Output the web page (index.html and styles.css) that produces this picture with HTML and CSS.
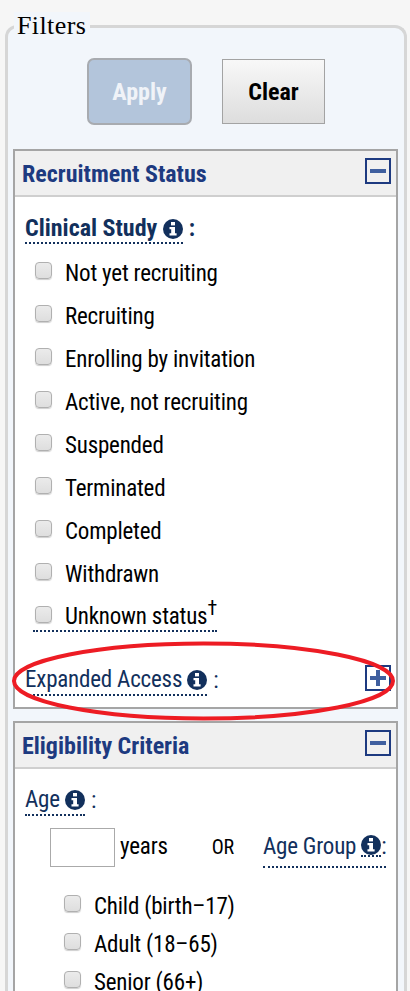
FILE: index.html
```html
<html>
  <head>
    <title>Filters</title>
    <link rel="stylesheet" href="styles.css">
  </head>
  <body>
    <fieldset class="filters">
      <legend class="filters-title">Filters</legend>
      <div class="actions">
        <button class="btn btn-apply">Apply</button>
        <button class="btn btn-clear">Clear</button>
      </div>

      <section class="panel panel-status">
        <header class="panel-head">
          <h3>Recruitment Status</h3>
          <svg class="toggle" width="26" height="26" viewBox="0 0 26 26"><rect x="1" y="1" width="24" height="24" fill="none" stroke="#1d3a80" stroke-width="2"/><rect x="5" y="11" width="16" height="4" fill="#3f5f9f"/></svg>
        </header>
        <div class="panel-body">
          <div class="label-row">
            <span class="term term-bold">Clinical Study <svg class="info" viewBox="0 0 20 20"><use href="#info"/></svg></span>
            <b class="colon">:</b>
          </div>
          <ul class="checks">
            <li><i class="box"></i>Not yet recruiting</li>
            <li><i class="box"></i>Recruiting</li>
            <li><i class="box"></i>Enrolling by invitation</li>
            <li><i class="box"></i>Active, not recruiting</li>
            <li><i class="box"></i>Suspended</li>
            <li><i class="box"></i>Terminated</li>
            <li><i class="box"></i>Completed</li>
            <li><i class="box"></i>Withdrawn</li>
            <li><i class="box"></i><span class="term unknown">Unknown status<sup>†</sup></span></li>
          </ul>
          <div class="label-row expanded">
            <span class="term">Expanded Access <svg class="info" viewBox="0 0 20 20"><use href="#info"/></svg></span>
            <span class="colon">:</span>
            <svg class="toggle" width="26" height="26" viewBox="0 0 26 26"><rect x="1" y="1" width="24" height="24" fill="none" stroke="#1d3a80" stroke-width="2"/><rect x="5" y="11" width="16" height="4" fill="#3f5f9f"/><rect x="11" y="5" width="4" height="16" fill="#3f5f9f"/></svg>
          </div>
        </div>
      </section>

      <section class="panel">
        <header class="panel-head">
          <h3>Eligibility Criteria</h3>
          <svg class="toggle" width="26" height="26" viewBox="0 0 26 26"><rect x="1" y="1" width="24" height="24" fill="none" stroke="#1d3a80" stroke-width="2"/><rect x="5" y="11" width="16" height="4" fill="#3f5f9f"/></svg>
        </header>
        <div class="panel-body">
          <div class="label-row">
            <span class="term">Age <svg class="info" viewBox="0 0 20 20"><use href="#info"/></svg></span>
            <span class="colon">:</span>
          </div>
          <div class="age-row">
            <input class="age-input" type="text">
            <span class="years">years</span>
            <span class="or">OR</span>
            <span class="term group">Age Group <svg class="info info-dotted" viewBox="0 0 20 20"><use href="#info"/></svg>:</span>
          </div>
          <ul class="checks checks-age">
            <li><i class="box"></i>Child (birth–17)</li>
            <li><i class="box"></i>Adult (18–65)</li>
            <li><i class="box"></i>Senior (66+)</li>
          </ul>
        </div>
      </section>
    </fieldset>

    <svg class="ring" width="410" height="991" viewBox="0 0 410 991"><ellipse cx="203.500" cy="681" rx="189.500" ry="37.500" fill="none" stroke="#ed1c24" stroke-width="4"/></svg>

    <svg class="defs" width="0" height="0">
      <symbol id="info" viewBox="0 0 20 20">
        <circle cx="10" cy="10" r="10" fill="#12305c"/>
        <rect x="8" y="3" width="4" height="3.400" fill="#fff"/>
        <path d="M6.500 8h5.500v6.200h1.600v2.300H6.500v-2.300h1.700v-3.900H6.500z" fill="#fff"/>
      </symbol>
    </svg>
  </body>
</html>
```

FILE: styles.css
```css
html, body {
  margin: 0;
  height: 991px;
  overflow: hidden;
  background: #f6f6f6;
}

body {
  position: relative;
  font-family: Roboto, "Liberation Sans", sans-serif;
  font-stretch: 75%;
  font-size: 23px;
  letter-spacing: -0.2px;
  color: #000;
}

.filters {
  box-sizing: border-box;
  width: 402px;
  min-height: 990px;
  margin: 12px 0 0 5px;
  padding: 18px 6px 0 5px;
  border: 3px solid #d6d6d6;
  border-bottom: 0;
  border-radius: 12px 12px 0 0;
  background: #f2f6fb;
}

.filters-title {
  margin-left: 1px;
  padding: 0 4px 0 3px;
  font: 26px/28px "Liberation Serif", serif;
  font-stretch: normal;
  letter-spacing: 0.4px;
  background: #f2f6fb;
}

.actions {
  display: flex;
  align-items: center;
  gap: 30px;
  margin-left: 74px;
}

.btn {
  box-sizing: border-box;
  padding: 0;
  font-family: inherit;
  font-stretch: inherit;
  font-size: 24px;
  font-weight: bold;
  letter-spacing: 0;
}

.btn-apply {
  width: 105px;
  height: 67px;
  border: 2px solid #a8abb0;
  border-radius: 7px;
  background: #b3c5db;
  color: #f0f3f8;
}

.btn-clear {
  width: 103px;
  height: 65px;
  border: 1px solid #a3a3a3;
  background: linear-gradient(#f8f8f8, #dddddd);
  color: #000;
}

.panel {
  border: 2px solid #a5a5a5;
  background: #fff;
}

.panel-status {
  margin-top: 24px;
  margin-bottom: 12px;
}

.panel-head {
  box-sizing: border-box;
  display: flex;
  justify-content: space-between;
  align-items: flex-start;
  height: 46px;
  padding: 7px 5px 0 7px;
  background: #f0f0f0;
  border-bottom: 2px solid #cfcfcf;
}

.panel-head h3 {
  margin: 0;
  font-size: 24px;
  line-height: 32px;
  font-weight: bold;
  letter-spacing: 0;
  color: #1d3a80;
}

.panel-body {
  padding: 17px 5px 11px 10px;
}

.label-row {
  display: flex;
  align-items: center;
  gap: 6px;
  color: #12305c;
  line-height: 28px;
}

.term {
  border-bottom: 2px dotted #12305c;
}

.term-bold {
  font-size: 24px;
  font-weight: bold;
  letter-spacing: 0;
}

.info {
  width: 20px;
  height: 20px;
  vertical-align: -3px;
}

.checks {
  list-style: none;
  margin: 8px 0 0;
  padding: 0 0 0 10px;
}

.checks li {
  display: flex;
  align-items: center;
  height: 43px;
}

.box {
  box-sizing: border-box;
  flex: none;
  width: 17px;
  height: 17px;
  margin-top: -6px;
  margin-right: 13px;
  border: 1px solid #b0b0b0;
  border-radius: 4px;
  background: linear-gradient(#ebebeb, #dedede);
  box-shadow: 0 1px 1px #cfcfcf;
}

.unknown {
  margin-left: -32px;
  padding-left: 32px;
  line-height: 26px;
}

.unknown sup {
  font-size: 20px;
  line-height: 0;
}

.expanded {
  margin-top: 27px;
}

.expanded .toggle {
  align-self: flex-start;
  margin-top: -1px;
  margin-left: auto;
}

.age-row {
  display: flex;
  align-items: flex-start;
  margin: 12px 0 0 25px;
  white-space: nowrap;
  line-height: 38px;
}

.age-input {
  box-sizing: border-box;
  width: 65px;
  height: 39px;
  border: 1px solid #aaa;
}

.years {
  margin-left: 5px;
}

.or {
  margin-left: 44px;
  font-size: 20px;
}

.group {
  margin-left: 29px;
  color: #12305c;
}

.info-dotted {
  border-bottom: 2px dotted #12305c;
  height: 20px;
}

.checks-age {
  margin-top: 19px;
  padding-left: 39px;
}

.checks-age li {
  height: 38px;
}

.ring {
  position: absolute;
  left: 0;
  top: 0;
  pointer-events: none;
}

.defs {
  position: absolute;
}
```
